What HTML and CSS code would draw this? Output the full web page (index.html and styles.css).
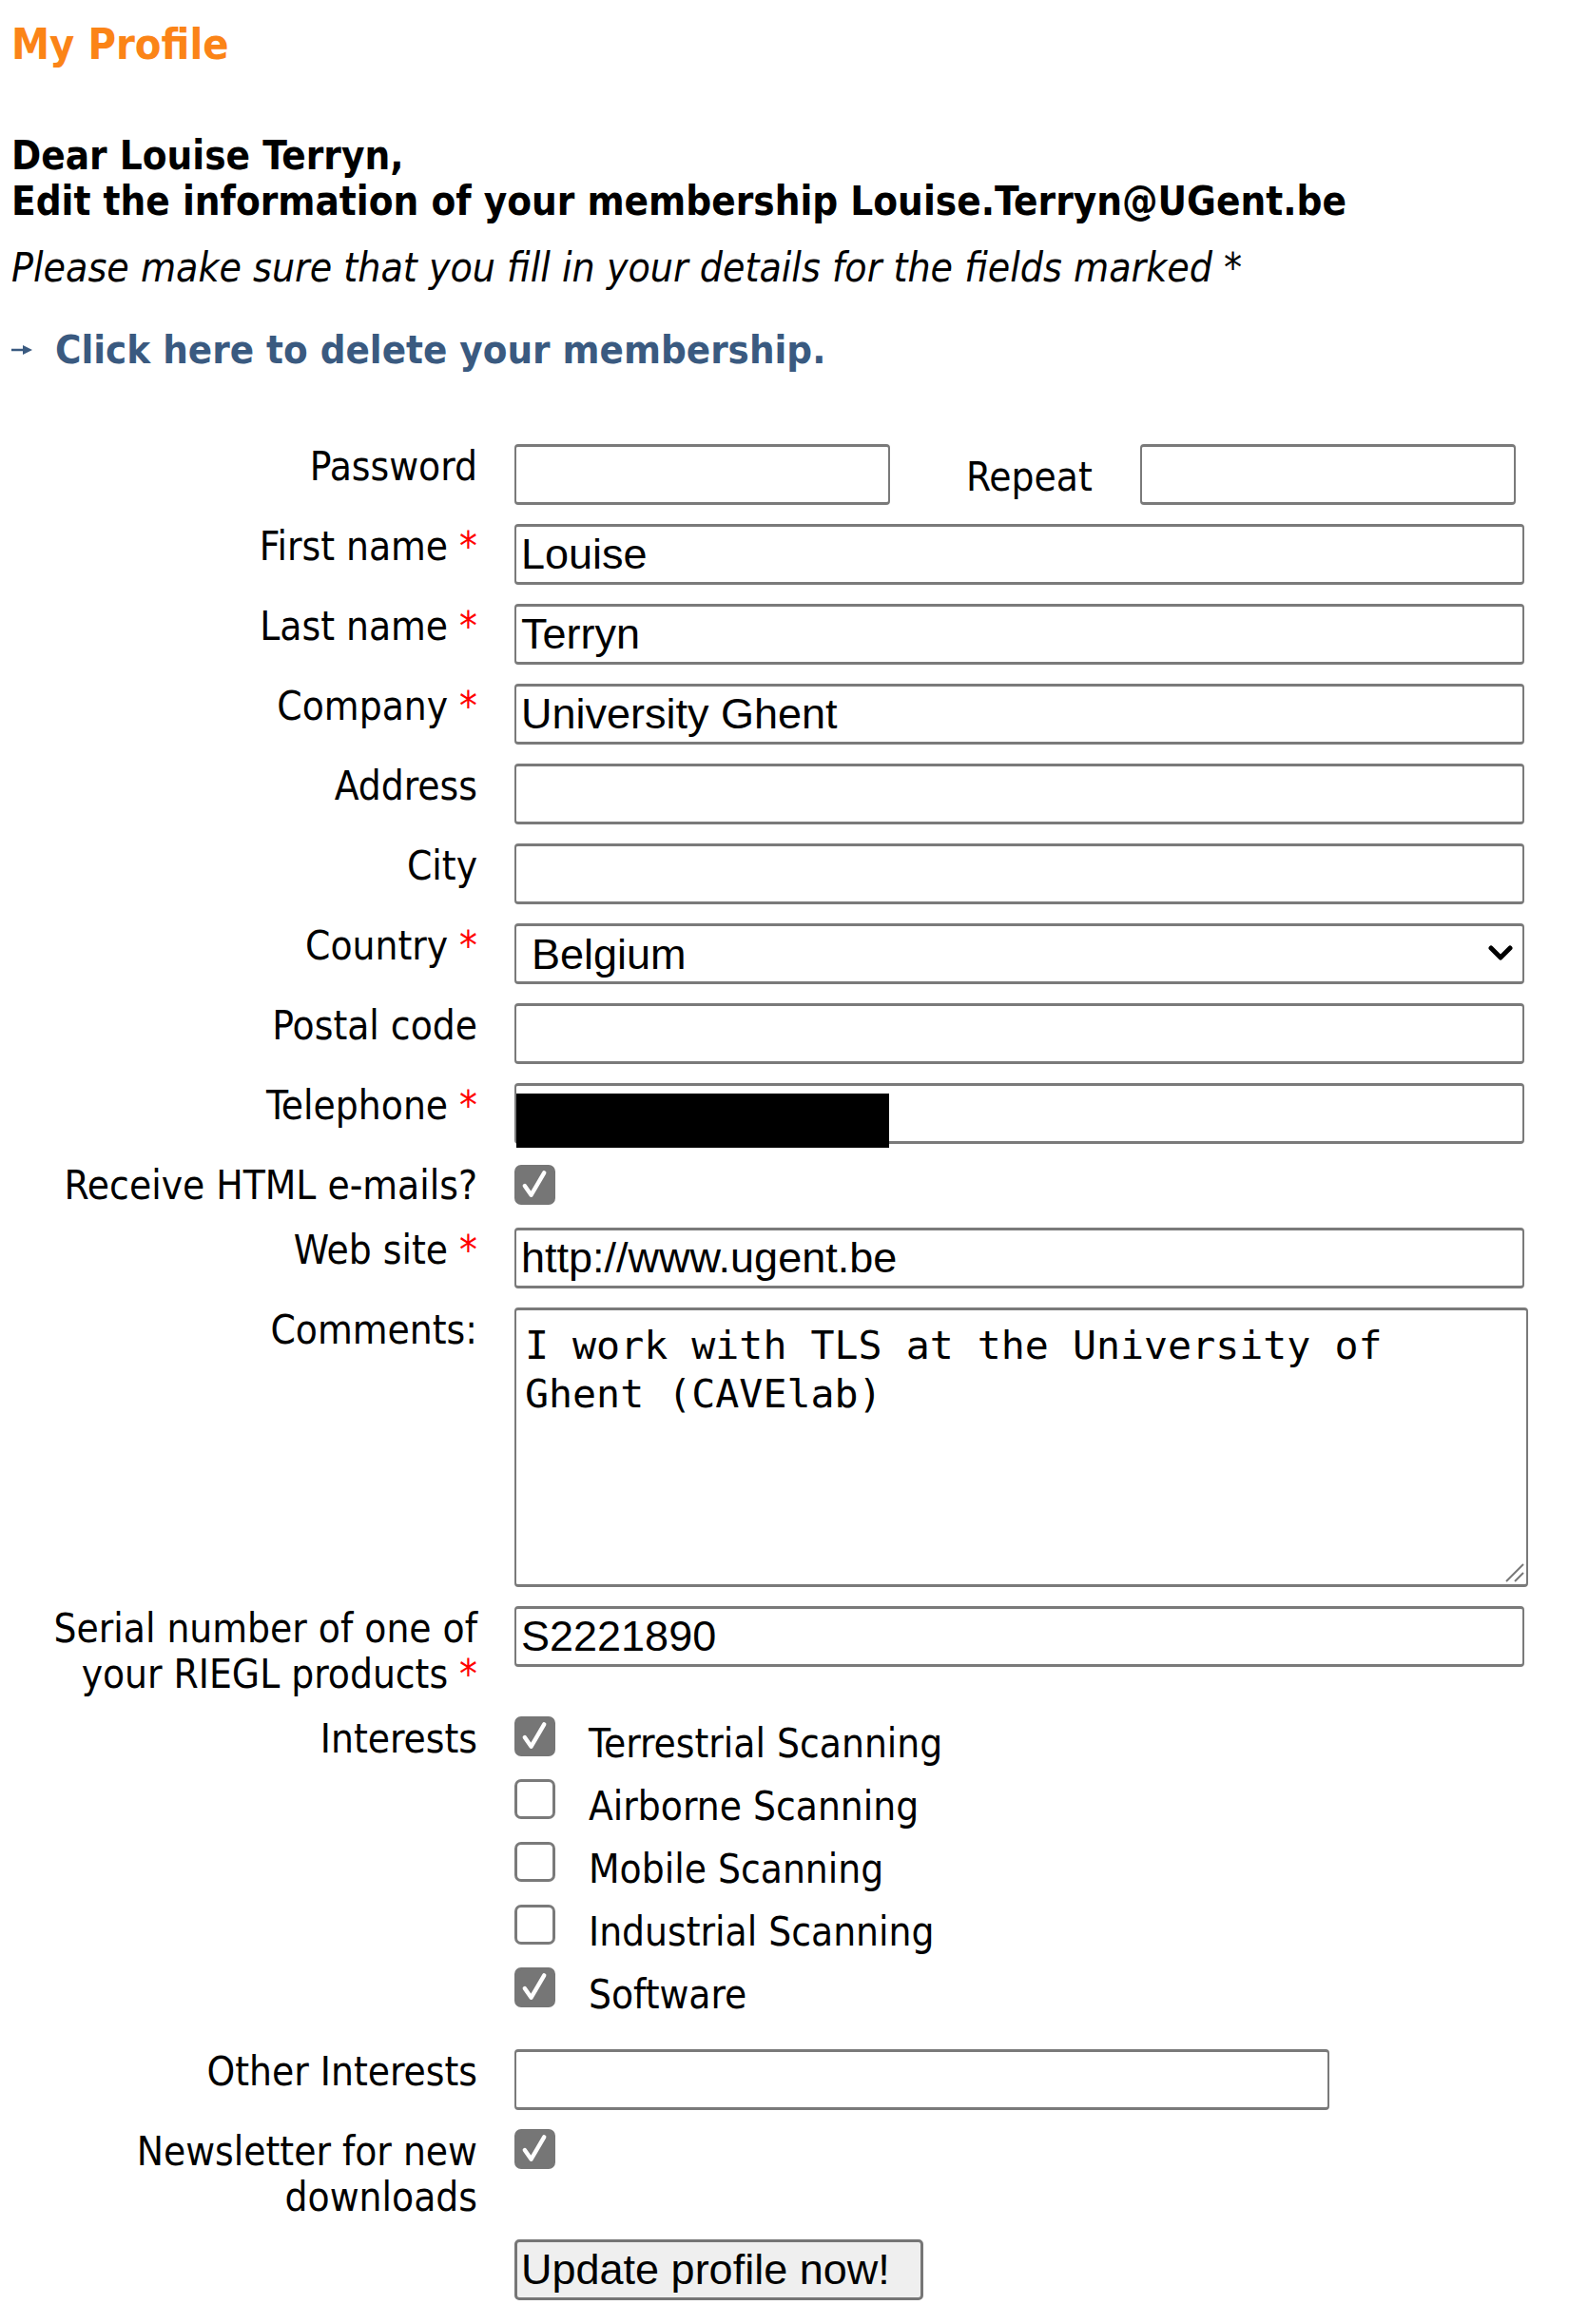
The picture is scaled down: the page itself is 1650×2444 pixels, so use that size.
FILE: index.html
```html
<!DOCTYPE html>
<html lang="en">
<head>
<meta charset="utf-8">
<title>My Profile</title>
<link rel="stylesheet" href="styles.css">
</head>
<body>
<div class="page">
  <h1 class="title">My Profile</h1>
  <p class="greeting">Dear Louise Terryn,<br>Edit the information of your membership Louise.Terryn@UGent.be</p>
  <p class="note">Please make sure that you fill in your details for the fields marked *</p>
  <p class="delete"><svg class="arrow" width="22" height="12" viewBox="0 0 22 12"><line x1="0" y1="6" x2="15" y2="6" stroke="#3a5a80" stroke-width="2.5"/><polygon points="12,1 22,6 12,11" fill="#3a5a80"/></svg><a href="#">Click here to delete your membership.</a></p>

  <form class="form">
    <label class="lbl">Password</label>
    <div class="pw-row">
      <input type="password" class="inp inp-pw">
      <span class="repeat">Repeat</span>
      <input type="password" class="inp inp-pw inp-pw2">
    </div>

    <label class="lbl">First name <span class="req">*</span></label>
    <input type="text" class="inp" value="Louise">

    <label class="lbl">Last name <span class="req">*</span></label>
    <input type="text" class="inp" value="Terryn">

    <label class="lbl">Company <span class="req">*</span></label>
    <input type="text" class="inp" value="University Ghent">

    <label class="lbl">Address</label>
    <input type="text" class="inp" value="">

    <label class="lbl">City</label>
    <input type="text" class="inp" value="">

    <label class="lbl">Country <span class="req">*</span></label>
    <div class="sel-wrap">
      <select class="inp sel"><option>Belgium</option></select>
      <svg class="chev" width="26" height="17" viewBox="0 0 26 17"><polyline points="3,3 13,13 23,3" fill="none" stroke="#000" stroke-width="5" stroke-linecap="round" stroke-linejoin="round"/></svg>
    </div>

    <label class="lbl">Postal code</label>
    <input type="text" class="inp" value="">

    <label class="lbl">Telephone <span class="req">*</span></label>
    <div class="tel-wrap">
      <input type="text" class="inp" value="">
      <span class="redact"></span>
    </div>

    <label class="lbl">Receive HTML e-mails?</label>
    <div class="cb-cell"><span class="cb on"><svg width="38" height="38" viewBox="0 0 38 38"><polyline points="8,20 15,30 29,6" fill="none" stroke="#fff" stroke-width="4.5" stroke-linecap="round" stroke-linejoin="round"/></svg></span></div>

    <label class="lbl">Web site <span class="req">*</span></label>
    <input type="text" class="inp" value="http://www.ugent.be">

    <label class="lbl">Comments:</label>
    <div class="ta-wrap">
      <textarea class="ta">I work with TLS at the University of
Ghent (CAVElab)</textarea>
      <svg class="grip" width="22" height="22" viewBox="0 0 22 22"><line x1="21" y1="3" x2="3" y2="21" stroke="#777" stroke-width="2"/><line x1="21" y1="12" x2="12" y2="21" stroke="#777" stroke-width="2"/></svg>
    </div>

    <label class="lbl">Serial number of one of<br>your RIEGL products <span class="req">*</span></label>
    <input type="text" class="inp" value="S2221890">

    <label class="lbl">Interests</label>
    <div class="interests">
      <div class="interest"><span class="cb on"><svg width="38" height="38" viewBox="0 0 38 38"><polyline points="8,20 15,30 29,6" fill="none" stroke="#fff" stroke-width="4.5" stroke-linecap="round" stroke-linejoin="round"/></svg></span><span class="itext">Terrestrial Scanning</span></div>
      <div class="interest"><span class="cb"></span><span class="itext">Airborne Scanning</span></div>
      <div class="interest"><span class="cb"></span><span class="itext">Mobile Scanning</span></div>
      <div class="interest"><span class="cb"></span><span class="itext">Industrial Scanning</span></div>
      <div class="interest"><span class="cb on"><svg width="38" height="38" viewBox="0 0 38 38"><polyline points="8,20 15,30 29,6" fill="none" stroke="#fff" stroke-width="4.5" stroke-linecap="round" stroke-linejoin="round"/></svg></span><span class="itext">Software</span></div>
    </div>

    <label class="lbl">Other Interests</label>
    <input type="text" class="inp inp-other" value="">

    <label class="lbl">Newsletter for new<br>downloads</label>
    <div class="cb-cell cb-top"><span class="cb on"><svg width="38" height="38" viewBox="0 0 38 38"><polyline points="8,20 15,30 29,6" fill="none" stroke="#fff" stroke-width="4.5" stroke-linecap="round" stroke-linejoin="round"/></svg></span></div>

    <span class="lbl"></span>
    <div><button type="button" class="btn">Update profile now!</button></div>
  </form>
</div>
</body>
</html>
```

FILE: styles.css
```css
* { box-sizing: border-box; }

body {
  margin: 0;
  background: #fff;
  color: #000;
  font-family: "DejaVu Sans Condensed", "DejaVu Sans", sans-serif;
  font-stretch: condensed;
}

.page {
  padding: 19px 0 40px 12px;
}

.title {
  margin: 0;
  font-size: 44.8px;
  line-height: 56px;
  font-weight: bold;
  color: #fb8417;
}

.greeting {
  margin: 65px 0 0;
  font-size: 41.8px;
  line-height: 48px;
  font-weight: bold;
}

.note {
  margin: 22px 0 0;
  font-size: 42.4px;
  line-height: 48px;
  font-style: italic;
}

.delete {
  margin: 38px 0 0;
  display: flex;
  align-items: center;
  font-size: 41.6px;
  line-height: 48px;
  font-weight: bold;
}

.arrow { flex: none; }

.delete a {
  color: #3a5a80;
  text-decoration: none;
  margin-left: 24px;
}

.form {
  margin-top: 75px;
  display: grid;
  grid-template-columns: 490px 1066px;
  column-gap: 39px;
  row-gap: 20px;
  align-items: start;
}

.lbl {
  text-align: right;
  font-size: 42px;
  line-height: 48px;
}

.req { color: #f00; }

.inp {
  display: block;
  width: 1062px;
  height: 64px;
  margin: 0;
  border-style: solid;
  border-color: #7a7a7a;
  border-width: 3px 2px;
  border-radius: 4px;
  padding: 0 5px;
  background: #fff;
  color: #000;
  font-family: "Liberation Sans", Arial, sans-serif;
  font-size: 45px;
  outline: none;
}

.pw-row {
  display: flex;
  align-items: center;
  width: 1053px;
}

.inp-pw { width: 395px; }

.repeat {
  margin-left: 80px;
  font-size: 42px;
  line-height: 48px;
  padding-top: 6px;
}

.inp-pw2 { margin-left: auto; }

.sel-wrap, .tel-wrap, .ta-wrap {
  position: relative;
  width: 1062px;
}

.sel {
  appearance: none;
  -webkit-appearance: none;
  padding-left: 16px;
}

.chev {
  position: absolute;
  right: 12px;
  top: 23px;
  pointer-events: none;
}

.redact {
  position: absolute;
  left: 2px;
  top: 11px;
  width: 392px;
  height: 57px;
  background: #000;
}

.cb-cell {
  height: 48px;
  padding-top: 2px;
}

.cb-top { padding-top: 0; }

.cb {
  display: flex;
  align-items: center;
  justify-content: center;
  flex: none;
  width: 43px;
  height: 42px;
  border: 3px solid #7a7a7a;
  border-radius: 7px;
  background: #fff;
}

.cb.on { background: #767676; border-color: #767676; }

.ta-wrap { width: 1066px; }

.ta {
  display: block;
  width: 1066px;
  height: 294px;
  margin: 0;
  border-style: solid;
  border-color: #7a7a7a;
  border-width: 3px 2px;
  border-radius: 4px;
  padding: 11px 9px;
  font-family: "DejaVu Sans Mono", "Liberation Mono", monospace;
  font-size: 41.6px;
  line-height: 51px;
  color: #000;
  resize: none;
  outline: none;
}

.grip {
  position: absolute;
  right: 4px;
  bottom: 5px;
  pointer-events: none;
}

.interests {
  display: flex;
  flex-direction: column;
}

.interest {
  display: flex;
  align-items: flex-start;
  height: 66px;
}

.itext {
  margin-left: 35px;
  padding-top: 5px;
  font-size: 42px;
  line-height: 48px;
}

.inp-other { width: 857px; }

.btn {
  display: block;
  width: 430px;
  height: 64px;
  margin: 0;
  padding: 0 0 0 4px;
  text-align: left;
  background: #efefef;
  border: 3px solid #767676;
  border-radius: 5px;
  color: #000;
  font-family: "Liberation Sans", Arial, sans-serif;
  font-size: 45px;
}
```
